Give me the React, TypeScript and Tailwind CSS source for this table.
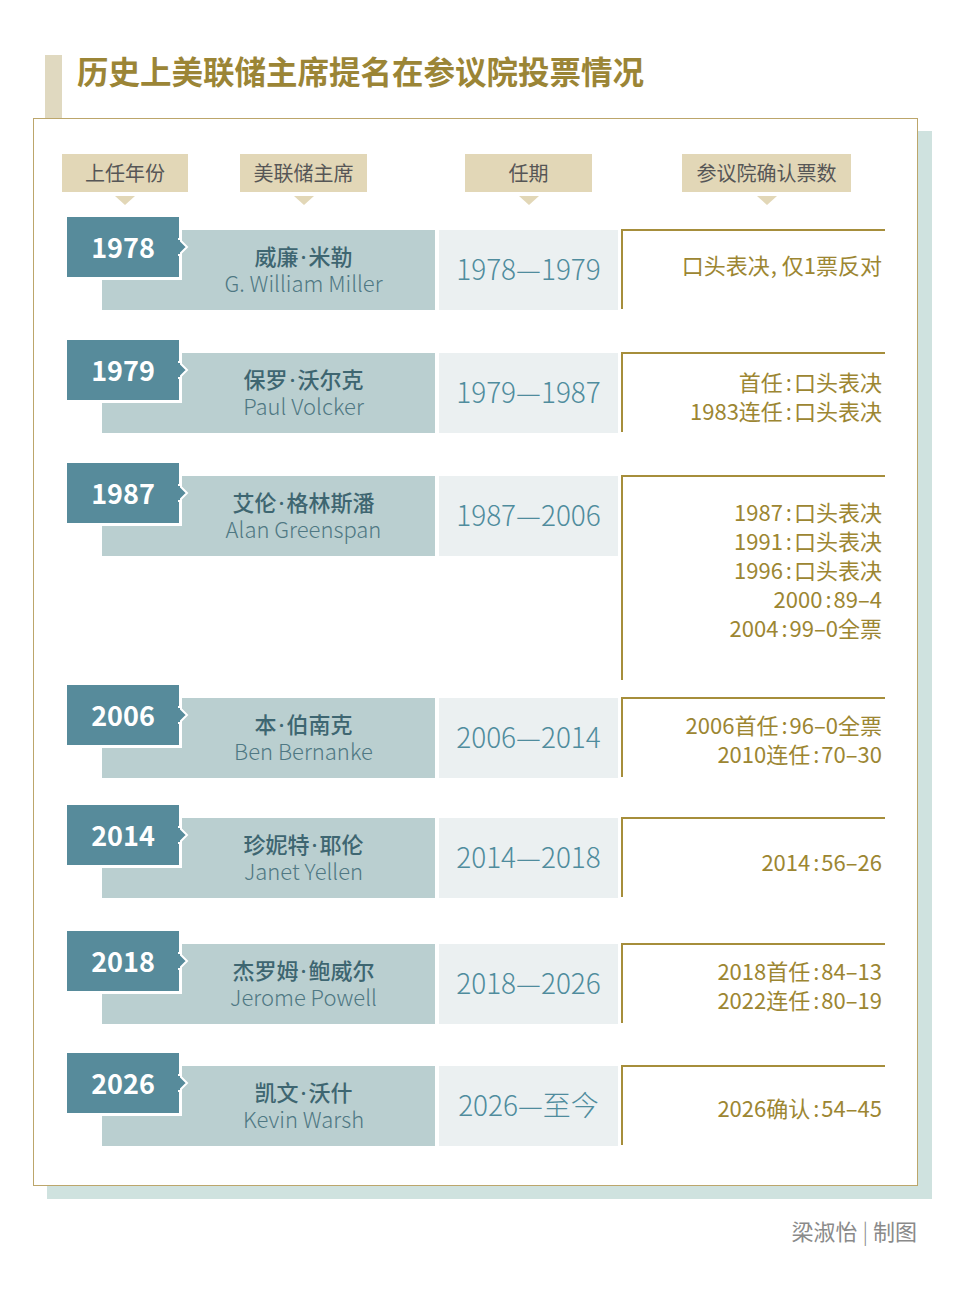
import type { ReactNode } from "react";

const rows = [
  { year: "1978", cn: "威廉·米勒", en: "G. William Miller", term: "1978—1979", votes: ["口头表决，仅1票反对"], rowH: "h-[123px]", voteH: "h-[80px] pb-[12px]" },
  { year: "1979", cn: "保罗·沃尔克", en: "Paul Volcker", term: "1979—1987", votes: ["首任：口头表决", "1983连任：口头表决"], rowH: "h-[123px]", voteH: "h-[80px] pt-[6px]" },
  {
    year: "1987",
    cn: "艾伦·格林斯潘",
    en: "Alan Greenspan",
    term: "1987—2006",
    votes: ["1987：口头表决", "1991：口头表决", "1996：口头表决", "2000：89–4", "2004：99–0全票"],
    rowH: "h-[222px]",
    voteH: "h-[205px] pb-[18px]",
  },
  { year: "2006", cn: "本·伯南克", en: "Ben Bernanke", term: "2006—2014", votes: ["2006首任：96–0全票", "2010连任：70–30"], rowH: "h-[120px]", voteH: "h-[80px] pt-[2px]" },
  { year: "2014", cn: "珍妮特·耶伦", en: "Janet Yellen", term: "2014—2018", votes: ["2014：56–26"], rowH: "h-[126px]", voteH: "h-[80px] pt-[6px]" },
  { year: "2018", cn: "杰罗姆·鲍威尔", en: "Jerome Powell", term: "2018—2026", votes: ["2018首任：84–13", "2022连任：80–19"], rowH: "h-[122px]", voteH: "h-[80px] pt-[2px]" },
  { year: "2026", cn: "凯文·沃什", en: "Kevin Warsh", term: "2026—至今", votes: ["2026确认：54–45"], rowH: "h-[120px]", voteH: "h-[80px] pt-[2px]" },
];

const headers = [
  { label: "上任年份", cls: "ml-[28px] w-[126px]" },
  { label: "美联储主席", cls: "ml-[52px] w-[127px]" },
  { label: "任期", cls: "ml-[98px] w-[127px]" },
  { label: "参议院确认票数", cls: "ml-[90px] w-[169px]" },
];

// narrow western punctuation like the printed graphic
function punct(text: string): ReactNode[] {
  const out: ReactNode[] = [];
  let buf = "";
  text.split("").forEach((ch, i) => {
    if (ch === "：" || ch === "，" || ch === "·") {
      if (buf) out.push(buf);
      buf = "";
      if (ch === "：") out.push(<span key={i} className="ml-[3px] mr-[2px]">:</span>);
      else if (ch === "，") out.push(<span key={i} className="ml-[1px] mr-[5px]">,</span>);
      else out.push(<span key={i} className="mx-[2px] font-['Noto_Sans',sans-serif]">·</span>);
    } else {
      buf += ch;
    }
  });
  if (buf) out.push(buf);
  return out;
}

function HeaderPill({ label, cls }: { label: string; cls: string }) {
  return (
    <div className={`flex flex-col items-center ${cls}`}>
      <div className="flex h-[38px] w-full items-center justify-center bg-[#e2d7b7] text-[20px] text-[#565656]">
        {label}
      </div>
      <div className="mt-[4px] h-0 w-0 border-x-[10px] border-t-[9px] border-x-transparent border-t-[#e2d7b7]" />
    </div>
  );
}

export default function App() {
  return (
    <div className="h-[1296px] w-[960px] bg-white font-['Noto_Sans_CJK_SC','Noto_Sans',sans-serif]">
      {/* title */}
      <div className="flex pt-[55px]">
        <div className="ml-[45px] h-[63px] w-[17px] bg-[#e0d9c0]" />
        <h1 className="ml-[15px] mt-[-2px] text-[31.5px] font-bold leading-[34px] text-[#9b8536]">
          历史上美联储主席提名在参议院投票情况
        </h1>
      </div>

      {/* main card */}
      <div className="ml-[33px] h-[1068px] w-[885px] border border-[#bca66b] bg-white pt-[35px] shadow-[14px_13px_0_#cfe2df]">
        <div className="flex">
          {headers.map((h) => (
            <HeaderPill key={h.label} label={h.label} cls={h.cls} />
          ))}
        </div>

        <div className="mt-[12px] flex flex-col">
          {rows.map((r) => (
            <div key={r.year} className={`flex items-start ${r.rowH}`}>
              {/* year tab */}
              <div className="relative z-10 ml-[33px] flex h-[63px] w-[115px] items-center justify-center border-b-[3px] border-r-[3px] border-white bg-[#578b9b] pb-[1px]">
                <span className="text-[27px] font-bold leading-none text-white">{r.year}</span>
                <svg className="absolute right-[-10px] top-[21px]" width="11" height="18" viewBox="0 0 11 18">
                  <polygon points="0,0 9,9 0,18" fill="#578b9b" stroke="#ffffff" strokeWidth="2" />
                  <rect x="0" y="2" width="2" height="14" fill="#578b9b" />
                </svg>
              </div>

              <div className="ml-[-80px] mt-[13px] flex items-start">
                {/* name */}
                <div className="flex h-[80px] w-[333px] flex-col items-center justify-center bg-[#bacfd0] pb-[4px] pl-[70px]">
                  <span className="text-[22px] font-medium leading-[26px] text-[#3e6671]">{punct(r.cn)}</span>
                  <span className="text-[22px] font-light leading-[26px] text-[#4f7883]">{r.en}</span>
                </div>
                {/* term */}
                <div className="ml-[4px] flex h-[80px] w-[179px] items-center justify-center bg-[#ebf0f1] pb-[4px]">
                  <span className="text-[28px] font-light text-[#4f8c9d]">{r.term}</span>
                </div>
                {/* votes */}
                <div
                  className={`ml-[3px] mt-[-1px] flex w-[264px] flex-col items-end justify-center border-l-2 border-t-2 border-[#a68e3b] pr-[3px] ${r.voteH}`}
                >
                  {r.votes.map((v) => (
                    <span key={v} className="text-[22px] leading-[29px] text-[#9c8632]">
                      {punct(v)}
                    </span>
                  ))}
                </div>
              </div>
            </div>
          ))}
        </div>
      </div>

      {/* credit */}
      <div className="mt-[29px] flex justify-end pr-[43px]">
        <span className="text-[22px] leading-[30px] text-[#8a8a8a]">
          梁淑怡<span className="mx-[5px] font-light">|</span>制图
        </span>
      </div>
    </div>
  );
}
